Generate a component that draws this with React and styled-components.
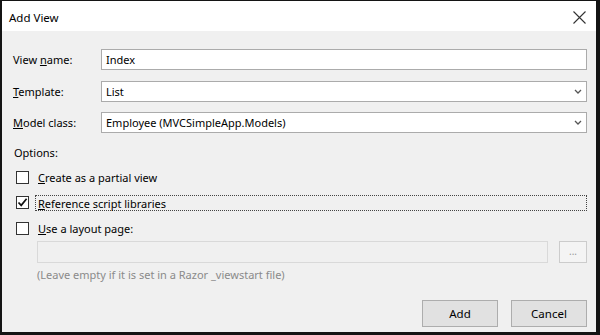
import React from "react";
import styled, { createGlobalStyle } from "styled-components";

const GlobalStyle = createGlobalStyle`
  html, body {
    margin: 0;
    padding: 0;
    background: #111;
  }
  body {
    font-family: "Noto Sans", "Open Sans", sans-serif;
    font-size: 11px;
    color: #000;
  }
`;

function Chevron() {
  return (
    <svg width="8" height="5" viewBox="0 0 8 5">
      <path d="M1 1 L4 4 L7 1" fill="none" stroke="#555" strokeWidth="1.3" />
    </svg>
  );
}

function CloseIcon() {
  return (
    <svg width="13" height="13" viewBox="0 0 13 13">
      <path d="M0.5 0.5 L12.5 12.5 M12.5 0.5 L0.5 12.5" stroke="#333" strokeWidth="1.1" />
    </svg>
  );
}

function Check() {
  return (
    <svg width="11" height="11" viewBox="0 0 11 11">
      <path d="M1.5 5.5 L4.2 8.4 L9.6 1.8" fill="none" stroke="#111" strokeWidth="1.7" />
    </svg>
  );
}

export default function App() {
  return (
    <>
      <GlobalStyle />
      <Frame>
        <TitleBar>
          <Title>Add View</Title>
          <CloseButton>
            <CloseIcon />
          </CloseButton>
        </TitleBar>
        <Body>
          <Fields>
            <FieldRow>
              <Label>
                View <u>n</u>ame:
              </Label>
              <TextBox>Index</TextBox>
            </FieldRow>
            <FieldRow>
              <Label>
                <u>T</u>emplate:
              </Label>
              <TextBox>
                List
                <Chevron />
              </TextBox>
            </FieldRow>
            <FieldRow>
              <Label>
                <u>M</u>odel class:
              </Label>
              <TextBox>
                Employee (MVCSimpleApp.Models)
                <Chevron />
              </TextBox>
            </FieldRow>
          </Fields>

          <SectionLabel>Options:</SectionLabel>

          <CheckList>
            <CheckRow>
              <Box />
              <CheckText>
                <u>C</u>reate as a partial view
              </CheckText>
            </CheckRow>
            <CheckRow>
              <Box>
                <Check />
              </Box>
              <CheckText $focused>
                <u>R</u>eference script libraries
              </CheckText>
            </CheckRow>
            <CheckRow>
              <Box />
              <CheckText>
                <u>U</u>se a layout page:
              </CheckText>
            </CheckRow>
          </CheckList>

          <LayoutRow>
            <DisabledBox />
            <BrowseButton>...</BrowseButton>
          </LayoutRow>
          <Hint>(Leave empty if it is set in a Razor _viewstart file)</Hint>

          <Footer>
            <Button>Add</Button>
            <Button>Cancel</Button>
          </Footer>
        </Body>
      </Frame>
    </>
  );
}

const Frame = styled.div`
  width: 594px;
  height: 331px;
  border-style: solid;
  border-color: #141414;
  border-width: 1px 4px 3px 2px;
  background: #f0f0f0;
  display: flex;
  flex-direction: column;
  overflow: hidden;
`;

const TitleBar = styled.div`
  height: 30px;
  background: #fff;
  display: flex;
  align-items: center;
  justify-content: space-between;
  padding: 0 7px;
`;

const Title = styled.div`
  font-size: 11.5px;
  color: #000;
  margin-top: 3px;
`;

const CloseButton = styled.div`
  display: flex;
  align-items: center;
  justify-content: center;
  width: 20px;
  height: 20px;
  margin-top: 3px;
`;

const Body = styled.div`
  flex: 1;
  display: flex;
  flex-direction: column;
  padding: 18px 9px 0 11px;
`;

const Fields = styled.div`
  display: flex;
  flex-direction: column;
  gap: 10.5px;
`;

const FieldRow = styled.div`
  display: flex;
  align-items: center;
  height: 21px;
`;

const Label = styled.div`
  width: 88px;
  flex-shrink: 0;
`;

const TextBox = styled.div`
  flex: 1;
  height: 21px;
  box-sizing: border-box;
  background: #fff;
  border: 1px solid #ababab;
  display: flex;
  align-items: center;
  justify-content: space-between;
  padding: 0 4px;
`;

const SectionLabel = styled.div`
  margin-top: 12px;
  line-height: 16px;
  padding-left: 1px;
`;

const CheckList = styled.div`
  display: flex;
  flex-direction: column;
  gap: 9.5px;
  margin-top: 8px;
`;

const CheckRow = styled.div`
  display: flex;
  align-items: center;
  height: 16px;
  padding-left: 3px;
`;

const Box = styled.div`
  width: 13px;
  height: 13px;
  box-sizing: border-box;
  border: 1px solid #333;
  background: #fff;
  display: flex;
  align-items: center;
  justify-content: center;
  flex-shrink: 0;
`;

const CheckText = styled.div`
  flex: ${(p) => (p.$focused ? 1 : "none")};
  height: 16px;
  line-height: 15px;
  box-sizing: border-box;
  margin-left: 6px;
  padding-left: 2px;
  border: 1px dotted ${(p) => (p.$focused ? "#444" : "transparent")};
`;

const LayoutRow = styled.div`
  display: flex;
  align-items: center;
  gap: 11px;
  margin-top: 5px;
  padding-left: 24px;
`;

const DisabledBox = styled.div`
  flex: 1;
  height: 22px;
  box-sizing: border-box;
  border: 1px solid #d9d9d9;
  background: #f0f0f0;
`;

const BrowseButton = styled.div`
  width: 28px;
  height: 22px;
  box-sizing: border-box;
  border: 1px solid #cccccc;
  background: #f4f4f4;
  color: #999;
  font-size: 10px;
  display: flex;
  align-items: center;
  justify-content: center;
  padding-bottom: 3px;
`;

const Hint = styled.div`
  margin-top: 4px;
  padding-left: 24px;
  color: #8a8a8a;
  line-height: 16px;
`;

const Footer = styled.div`
  display: flex;
  justify-content: flex-end;
  gap: 13px;
  margin-top: 17px;
`;

const Button = styled.div`
  width: 76px;
  height: 27px;
  box-sizing: border-box;
  background: #e1e1e1;
  border: 1px solid #adadad;
  display: flex;
  align-items: center;
  justify-content: center;
  font-size: 11.5px;
`;
